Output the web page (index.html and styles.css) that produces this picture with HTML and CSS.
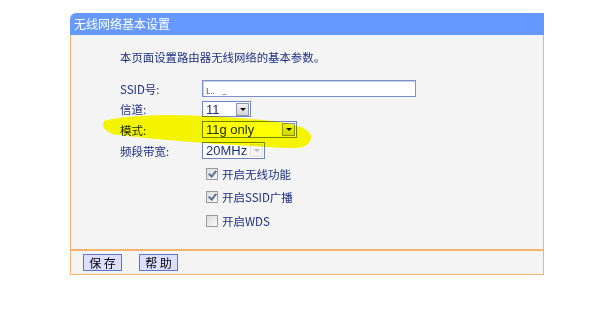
FILE: index.html
```html
<!DOCTYPE html>
<html lang="zh-CN">
<head>
  <meta charset="UTF-8" />
  <title>无线网络基本设置</title>
  <link rel="stylesheet" href="styles.css">
</head>
<body>
  <div class="panel">
    <div class="panel-title">无线网络基本设置</div>

    <div class="panel-body">
      <p class="intro">本页面设置路由器无线网络的基本参数。</p>

      <div class="form">
        <label class="lbl">SSID号:</label>
        <div class="ctl"><div class="text-input"><span class="ssid">L..&nbsp;&nbsp;&nbsp;&nbsp;_</span></div></div>

        <label class="lbl">信道:</label>
        <div class="ctl">
          <div class="select w-channel"><span class="val">11</span><span class="arrow"></span></div>
        </div>

        <label class="lbl">模式:</label>
        <div class="ctl">
          <div class="select w-mode"><span class="val">11g only</span><span class="arrow"></span></div>
        </div>

        <label class="lbl">频段带宽:</label>
        <div class="ctl">
          <div class="select w-band disabled"><span class="val">20MHz</span><span class="arrow"></span></div>
        </div>
      </div>

      <ul class="checks">
        <li><span class="box checked"></span>开启无线功能</li>
        <li><span class="box checked"></span>开启SSID广播</li>
        <li><span class="box"></span>开启WDS</li>
      </ul>
    </div>

    <div class="panel-foot">
      <button class="btn">保 存</button>
      <button class="btn">帮 助</button>
    </div>
  </div>

  <!-- hand-drawn highlight over the mode row -->
  <svg class="marker" width="600" height="315" viewBox="0 0 600 315">
    <path d="M104,121 C130,113 200,114 262,120 C292,123 309,127 311,136 C312,145 302,149 290,148 C240,146 170,141 118,135 C106,133 101,127 104,121 Z" fill="#ffff00"/>
  </svg>
</body>
</html>
```

FILE: styles.css
```css
body {
  margin: 0;
  background: #fff;
  font-family: "Noto Sans CJK SC", "DejaVu Sans", sans-serif;
  font-size: 11px;
  color: #1c2f80;
}

.panel {
  width: 474px;
  margin: 13px 0 0 70px;
}

.panel-title {
  height: 22px;
  line-height: 21px;
  padding-left: 4px;
  background: #6699ff;
  color: #fff;
  font-size: 12px;
  border-radius: 6px 0 0 0;
}

.panel-body {
  height: 214px;
  background: #f4f4f4;
  border-left: 1px solid #f7b36b;
  border-right: 1px solid #f7b36b;
  box-sizing: border-box;
  padding: 0 0 0 49px;
}

.intro {
  margin: 0;
  padding-top: 14px;
  height: 16px;
  line-height: 16px;
  font-size: 11.4px;
}

.form {
  display: grid;
  grid-template-columns: 82px auto;
  row-gap: 4px;
  margin-top: 15px;
  align-items: center;
}

.lbl {
  line-height: 16px;
  font-size: 11.5px;
}

.ctl {
  display: flex;
}

.text-input {
  width: 212px;
  height: 15px;
  background: #fff;
  border: 1px solid #7a90c8;
  box-shadow: inset 1px 1px 0 #c8d0e8;
}

.ssid {
  font-size: 8px;
  color: #333;
  padding-left: 3px;
  line-height: 14px;
}

.select {
  display: flex;
  align-items: center;
  justify-content: space-between;
  height: 15px;
  background: #fff;
  border: 1px solid #6f84c2;
  font-family: "Liberation Sans", Arial, sans-serif;
  font-size: 13px;
  color: #1c2f80;
  padding-left: 3px;
}

.w-channel { width: 44px; height: 14px; }
.w-mode { width: 90px; }
.w-band { width: 58px; }

.val {
  line-height: 15px;
}

.arrow {
  position: relative;
  width: 11px;
  height: 11px;
  margin-right: 1px;
  background: linear-gradient(#f2f2f2, #d4d4d4);
  border: 1px solid #8b95a8;
}

.arrow::after {
  content: "";
  position: absolute;
  left: 3px;
  top: 4px;
  border-left: 3px solid transparent;
  border-right: 3px solid transparent;
  border-top: 3px solid #111;
}

.disabled .arrow {
  background: #f4f4f4;
  border-color: #e0e0e0;
}

.disabled .arrow::after {
  border-top-color: #b8b8b8;
}

.checks {
  list-style: none;
  margin: 3px 0 0 86px;
  padding: 0;
  font-size: 11.5px;
}

.checks li {
  display: flex;
  align-items: center;
  height: 23.5px;
}

.box {
  width: 10px;
  height: 10px;
  border: 1px solid #9a9a9a;
  background: linear-gradient(135deg, #dcdcdc, #f8f8f8);
  margin-right: 4px;
  position: relative;
}

.box.checked::after {
  content: "";
  position: absolute;
  left: 3px;
  top: 0;
  width: 3px;
  height: 6px;
  border-right: 2px solid #5b6f9a;
  border-bottom: 2px solid #5b6f9a;
  transform: rotate(40deg);
}

.panel-foot {
  display: flex;
  gap: 17px;
  align-items: center;
  height: 23px;
  padding-left: 12px;
  background: #f4f4f4;
  border: 1px solid #f7b36b;
  border-top: 2px solid #f7b36b;
}

.btn {
  height: 17px;
  width: 39px;
  padding: 0;
  background: #dcdfff;
  border: 1px solid #5e74c6;
  font-family: "Noto Sans CJK SC", sans-serif;
  font-size: 12px;
  line-height: 14px;
  color: #000;
}

.marker {
  position: absolute;
  left: 0;
  top: 0;
  mix-blend-mode: multiply;
  pointer-events: none;
}
```
